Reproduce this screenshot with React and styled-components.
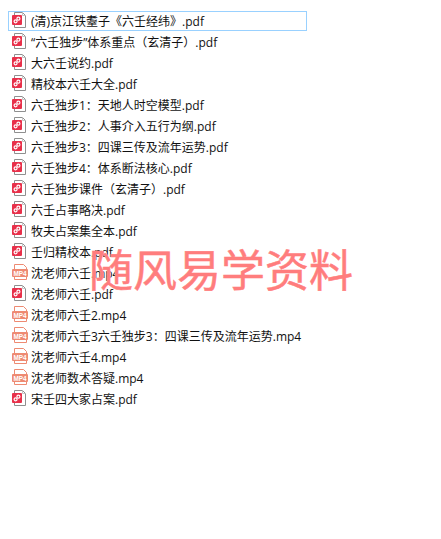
import styled, { createGlobalStyle } from 'styled-components'

const GlobalStyle = createGlobalStyle`
    html, body {
        margin: 0;
        padding: 0;
        background: #fff;
    }
`

const Page = styled.div`
    position: relative;
    width: 441px;
    height: 539px;
    overflow: hidden;
    box-sizing: border-box;
    padding: 11px 0 0 8px;
    font-family: 'Open Sans', 'Noto Sans CJK SC', sans-serif;
`

const List = styled.ul`
    list-style: none;
    margin: 0;
    padding: 0;
    display: flex;
    flex-direction: column;
    align-items: flex-start;
    gap: 1px;
`

const Row = styled.li`
    box-sizing: border-box;
    display: flex;
    align-items: flex-start;
    gap: 2px;
    height: 20px;
    padding-left: 3px;
    width: ${({ $selected }) => ($selected ? '299px' : 'auto')};
    border: 1px solid ${({ $selected }) => ($selected ? '#99d1ff' : 'transparent')};
`

const IconSlot = styled.svg`
    flex: none;
    display: block;
`

const FileName = styled.span`
    margin: 2px 0 0 1px;
    font-size: 12px;
    line-height: 16px;
    color: #111;
    white-space: nowrap;
`

const Watermark = styled.div`
    position: absolute;
    left: 89px;
    top: 240px;
    font-family: 'Noto Sans CJK SC', sans-serif;
    font-size: 44px;
    font-weight: 400;
    line-height: 56px;
    color: #ff7d7d;
    -webkit-text-stroke: 0.5px #ff7d7d;
    text-shadow: 0 0 1px #fff;
    white-space: nowrap;
`

const PdfIcon = () => (
    <IconSlot width="16" height="16" viewBox="0 0 16 16">
        <path d="M2.5 .5H10.5L13.5 3.5V15.5H2.5Z" fill="#fff" stroke="#8f8f8f" />
        <path d="M10.5 .5V3.5H13.5" fill="none" stroke="#c4c4c4" />
        <rect x="0" y="3" width="10" height="10" rx="1" fill="#e8304a" />
        <circle cx="3.6" cy="9.3" r="1.5" fill="none" stroke="#fff" strokeWidth="1.2" />
        <circle cx="6.4" cy="6.7" r="1.5" fill="none" stroke="#fff" strokeWidth="1.2" />
    </IconSlot>
)

const Mp4Icon = () => (
    <IconSlot width="16" height="16" viewBox="0 0 16 16">
        <path d="M2.5 .5H11.5L14.5 3.5V15.5H2.5Z" fill="#fff" stroke="#ee8a72" />
        <rect x="0" y="5" width="16" height="8" rx="1" fill="#ee8a72" />
        <text
            x="8"
            y="11.6"
            textAnchor="middle"
            fontFamily="'Liberation Sans', sans-serif"
            fontSize="6.4"
            fontWeight="700"
            fill="#fff"
        >
            MP4
        </text>
    </IconSlot>
)

const files = [
    '(清)京江铁耋子《六壬经纬》.pdf',
    '“六壬独步”体系重点（玄清子）.pdf',
    '大六壬说约.pdf',
    '精校本六壬大全.pdf',
    '六壬独步1：天地人时空模型.pdf',
    '六壬独步2：人事介入五行为纲.pdf',
    '六壬独步3：四课三传及流年运势.pdf',
    '六壬独步4：体系断法核心.pdf',
    '六壬独步课件（玄清子）.pdf',
    '六壬占事略决.pdf',
    '牧夫占案集全本.pdf',
    '壬归精校本.pdf',
    '沈老师六壬.mp4',
    '沈老师六壬.pdf',
    '沈老师六壬2.mp4',
    '沈老师六壬3六壬独步3：四课三传及流年运势.mp4',
    '沈老师六壬4.mp4',
    '沈老师数术答疑.mp4',
    '宋壬四大家占案.pdf',
]

const App = () => {
    return (
        <Page>
            <GlobalStyle />
            <List>
                {files.map((name, i) => (
                    <Row key={name} $selected={i === 0}>
                        {name.endsWith('.mp4') ? <Mp4Icon /> : <PdfIcon />}
                        <FileName>{name}</FileName>
                    </Row>
                ))}
            </List>
            <Watermark>随风易学资料</Watermark>
        </Page>
    )
}

export default App
